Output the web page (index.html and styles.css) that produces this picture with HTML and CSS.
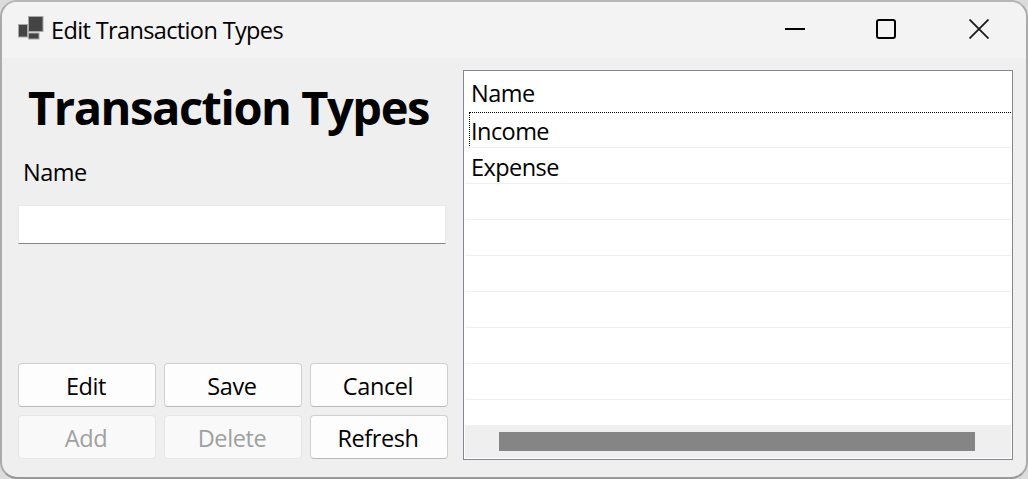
FILE: index.html
```html
<!DOCTYPE html>
<html lang="en">
<head>
<meta charset="utf-8">
<title>Edit Transaction Types</title>
<link rel="stylesheet" href="styles.css">
</head>
<body>
<div class="window">
  <header class="titlebar">
    <svg class="app-icon" width="26" height="24" viewBox="0 0 26 24">
      <g fill="#444" stroke="#a8a8a8" stroke-width="1">
        <rect x=".5" y="8.5" width="9" height="12.5"/>
        <rect x="10.5" y=".5" width="14.5" height="15"/>
        <rect x="10.5" y="17" width="10.500" height="6"/>
      </g>
    </svg>
    <span class="caption">Edit Transaction Types</span>
    <div class="controls">
      <svg width="20" height="20" viewBox="0 0 20 20"><path d="M0 10h20" stroke="#000" stroke-width="2"/></svg>
      <svg width="20" height="20" viewBox="0 0 20 20"><rect x="1" y="1" width="18" height="18" rx="2" fill="none" stroke="#000" stroke-width="2"/></svg>
      <svg width="20" height="20" viewBox="0 0 20 20"><path d="M.5 .5l19 19M19.500 .5l-19 19" stroke="#1a1a1a" stroke-width="1.800"/></svg>
    </div>
  </header>
  <main class="content">
    <section class="form">
      <h1 class="heading">Transaction Types</h1>
      <label class="label" for="name">Name</label>
      <input class="field" id="name" type="text">
      <div class="buttons">
        <button class="btn">Edit</button>
        <button class="btn">Save</button>
        <button class="btn">Cancel</button>
        <button class="btn" disabled>Add</button>
        <button class="btn" disabled>Delete</button>
        <button class="btn">Refresh</button>
      </div>
    </section>
    <section class="list">
      <div class="list-head">Name</div>
      <div class="row focused"><span>Income</span></div>
      <div class="row">Expense</div>
      <div class="row"></div>
      <div class="row"></div>
      <div class="row"></div>
      <div class="row"></div>
      <div class="row"></div>
      <div class="row"></div>
      <div class="scrollbar"><div class="thumb"></div></div>
    </section>
  </main>
</div>
</body>
</html>
```
FILE: styles.css
```css
* { box-sizing: border-box; }
body {
  margin: 0;
  background: #dcdcdc;
  font-family: "Open Sans", sans-serif;
  font-size: 23.5px;
  color: #000;
}
.window {
  width: 1028px;
  height: 479px;
  border: 2px solid #aaa;
  border-top-color: #b6b6b6;
  border-bottom-color: #999;
  border-radius: 17px;
  background: #efefef;
  overflow: hidden;
}
.titlebar {
  display: flex;
  height: 56px;
  padding: 0 37px 0 16px;
  background: #f3f3f3;
}
.app-icon { margin-top: 14px; }
.caption {
  margin: 11px 0 0 7px;
  line-height: 34px;
  white-space: nowrap;
  letter-spacing: -0.63px;
}
.controls {
  display: grid;
  grid-template-columns: 91px 93px 20px;
  margin: 17px 0 0 auto;
}
.content {
  display: flex;
  height: 419px;
  padding: 12px 13px 17px 16px;
}
.form {
  display: flex;
  flex-direction: column;
  width: 445px;
}
.heading {
  margin: 3px 0 0 10px;
  height: 68px;
  font-size: 47px;
  font-weight: 700;
  line-height: 68px;
  white-space: nowrap;
  letter-spacing: -1.45px;
}
.label {
  margin: 14px 0 0 5px;
  height: 34px;
  line-height: 34px;
  letter-spacing: -0.5px;
}
.field {
  width: 428px;
  height: 39px;
  margin: 16px 0 0;
  padding: 4px;
  border: 1px solid #e9e9e9;
  border-bottom-color: #868686;
  background: #fff;
  font: inherit;
  outline: none;
}
.buttons {
  display: grid;
  grid-template-columns: repeat(3, 138px);
  grid-auto-rows: 44px;
  gap: 8px;
  margin-top: auto;
  margin-bottom: 1px;
}
.btn {
  padding: 1px 2px 0 0;
  border: 1px solid #d0d0d0;
  border-bottom-color: #bababa;
  border-radius: 4px;
  background: #fdfdfd;
  color: #000;
  font: inherit;
  line-height: 34px;
  letter-spacing: -0.4px;
}
.btn:disabled {
  border-color: #e6e6e6;
  background: #f9f9f9;
  color: #a0a0a0;
}
.list {
  display: flex;
  flex-direction: column;
  width: 550px;
  height: 390px;
  padding: 0 1px 1px;
  border: 1px solid #828790;
  background: #fff;
}
.list-head {
  height: 41px;
  padding: 5px 0 0 6px;
  line-height: 34px;
  letter-spacing: -0.5px;
}
.row {
  flex: none;
  height: 36px;
  padding: 2px 0 0 6px;
  border-bottom: 1px solid #efefef;
  line-height: 34px;
  letter-spacing: -0.55px;
}
.row.focused { padding: 0 0 1px 4px; }
.row.focused span {
  display: block;
  height: 34px;
  padding: 1px 0 0 1px;
  border-top: 1px dotted #000;
  border-left: 1px dotted #000;
}
.scrollbar {
  height: 33px;
  margin-top: auto;
  padding: 7px 36px 7px 34px;
  background: #efefef;
}
.thumb {
  height: 19px;
  background: #858585;
}
```
